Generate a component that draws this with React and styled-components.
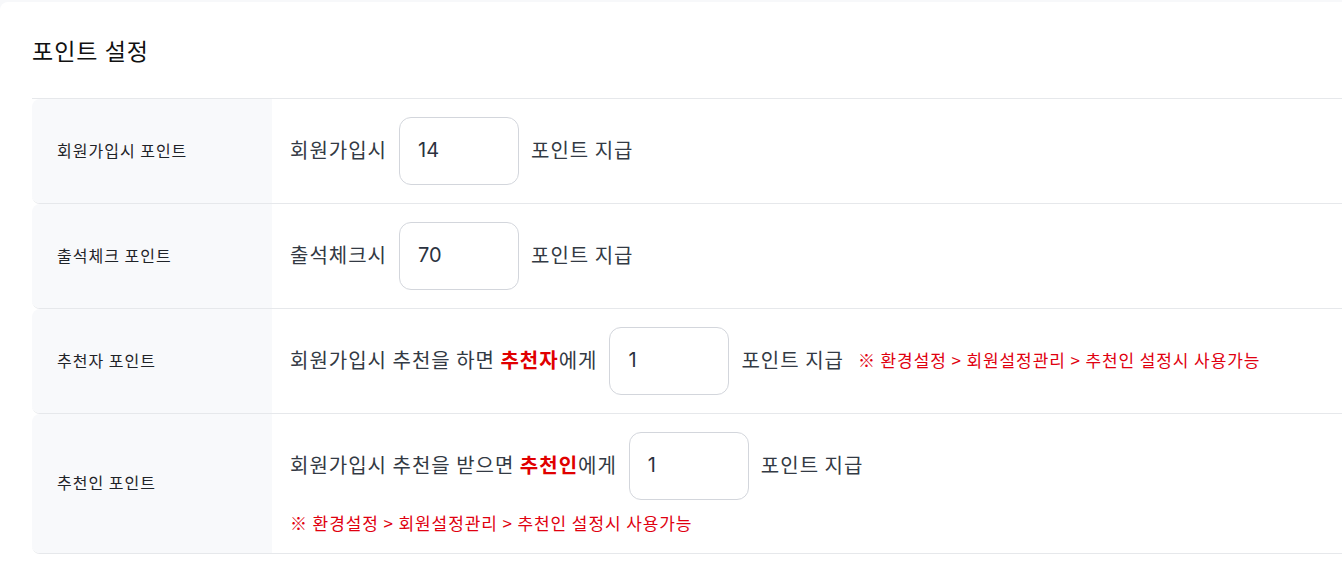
import React from "react";
import styled, { createGlobalStyle } from "styled-components";

const Global = createGlobalStyle`
  html, body { margin: 0; padding: 0; background: #f7f8fa; overflow: hidden; }
  body { font-family: "Noto Sans CJK KR", "Inter", sans-serif; color: #222; }
`;

const Card = styled.section`
  margin-top: 2px;
  margin-right: -40px;
  background: #fff;
  border-radius: 8px 8px 0 0;
  padding: 23px 0 30px 32px;
  min-height: 560px;
  box-sizing: border-box;
`;

const Title = styled.h2`
  margin: 0 0 23px;
  font-size: 23px;
  letter-spacing: 1px;
  font-weight: 400;
  line-height: 50px;
  color: #111;
`;

const Table = styled.div`
  border-top: 1px solid #e6e8eb;
  display: flex;
  flex-direction: column;
`;

const Row = styled.div`
  display: grid;
  grid-template-columns: 240px 1fr;
  border-bottom: 1px solid #e6e8eb;
  border-radius: 8px;
  overflow: hidden;
`;

const Label = styled.div`
  background: #f8f9fb;
  display: flex;
  align-items: center;
  padding: 0 0 3px 25px;
  font-size: 16px;
  letter-spacing: 1px;
  color: #1f2328;
`;

const Content = styled.div`
  padding: 18px;
  display: flex;
  flex-direction: column;
  gap: 10px;
`;

const Line = styled.div`
  display: flex;
  align-items: center;
  gap: 12px;
  font-size: 20px;
  letter-spacing: 1px;
  color: #333a44;
`;

const Text = styled.span`
  padding-bottom: 3px;
`;

const Strong = styled.b`
  color: #e00000;
  font-weight: 700;
`;

const NumberInput = styled.input`
  width: 120px;
  height: 68px;
  box-sizing: border-box;
  border: 1px solid #d3d6dc;
  border-radius: 12px;
  padding: 0 18px 2px;
  font-family: "Inter", "Noto Sans CJK KR", sans-serif;
  font-size: 20px;
  color: #2b3240;
  background: #fff;
  outline: none;
`;

const Note = styled.span`
  color: #e0000f;
  font-size: 17px;
  letter-spacing: 0.9px;
  margin-left: ${(p) => (p.$inline ? "2px" : "0")};
  padding-bottom: ${(p) => (p.$inline ? "3px" : "0")};
`;

const NOTE = "※ 환경설정 > 회원설정관리 > 추천인 설정시 사용가능";

export default function App() {
  return (
    <>
      <Global />
      <Card>
        <Title>포인트 설정</Title>
        <Table>
          <Row>
            <Label>회원가입시 포인트</Label>
            <Content>
              <Line>
                <Text>회원가입시</Text>
                <NumberInput defaultValue="14" />
                <Text>포인트 지급</Text>
              </Line>
            </Content>
          </Row>
          <Row>
            <Label>출석체크 포인트</Label>
            <Content>
              <Line>
                <Text>출석체크시</Text>
                <NumberInput defaultValue="70" />
                <Text>포인트 지급</Text>
              </Line>
            </Content>
          </Row>
          <Row>
            <Label>추천자 포인트</Label>
            <Content>
              <Line>
                <Text>
                  회원가입시 추천을 하면 <Strong>추천자</Strong>에게
                </Text>
                <NumberInput defaultValue="1" />
                <Text>포인트 지급</Text>
                <Note $inline>{NOTE}</Note>
              </Line>
            </Content>
          </Row>
          <Row>
            <Label>추천인 포인트</Label>
            <Content>
              <Line>
                <Text>
                  회원가입시 추천을 받으면 <Strong>추천인</Strong>에게
                </Text>
                <NumberInput defaultValue="1" />
                <Text>포인트 지급</Text>
              </Line>
              <Note>{NOTE}</Note>
            </Content>
          </Row>
        </Table>
      </Card>
    </>
  );
}
